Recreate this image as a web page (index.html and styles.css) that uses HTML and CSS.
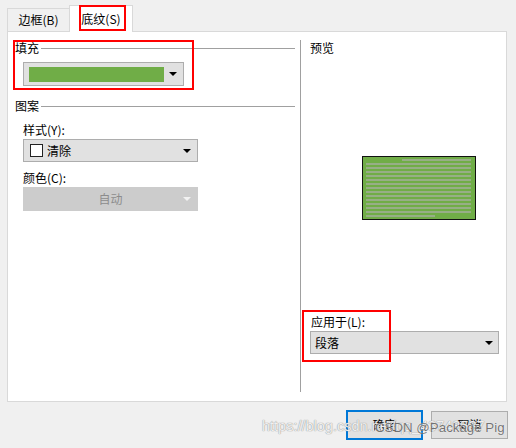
FILE: index.html
```html
<!DOCTYPE html>
<html>
<head>
<meta charset="utf-8">
<link rel="stylesheet" href="styles.css">
</head>
<body>
<div class="dialog">
  <div class="tabs">
    <div class="tab">边框(B)</div>
    <div class="tab active">底纹(S)</div>
  </div>
  <div class="panel">
    <div class="left">
      <div class="legend"><span>填充</span><i class="rule"></i></div>
      <div class="combo fill">
        <span class="swatch"></span>
        <span class="arrow"></span>
      </div>
      <div class="legend pattern"><span>图案</span><i class="rule"></i></div>
      <div class="label">样式(Y):</div>
      <div class="combo wide">
        <span class="check"></span>
        <span class="value">清除</span>
        <span class="arrow"></span>
      </div>
      <div class="label">颜色(C):</div>
      <div class="combo wide disabled">
        <span class="value center">自动</span>
        <span class="arrow"></span>
      </div>
    </div>
    <div class="divider"></div>
    <div class="right">
      <div class="label-top">预览</div>
      <div class="preview">
        <i class="stripe first"></i>
        <i class="stripe"></i><i class="stripe"></i><i class="stripe"></i>
        <i class="stripe"></i><i class="stripe"></i><i class="stripe"></i>
        <i class="stripe"></i><i class="stripe"></i><i class="stripe"></i>
        <i class="stripe"></i><i class="stripe"></i><i class="stripe"></i>
        <i class="stripe"></i>
        <i class="stripe last"></i>
      </div>
      <div class="apply">
        <div class="label">应用于(L):</div>
        <div class="combo apply-combo">
          <span class="value">段落</span>
          <span class="arrow"></span>
        </div>
      </div>
    </div>
  </div>
  <div class="buttons">
    <div class="btn default">确定</div>
    <div class="btn">取消</div>
  </div>
  <div class="mark mark-tab"></div>
  <div class="mark mark-fill"></div>
  <div class="mark mark-apply"></div>
  <div class="wm-url">https://blog.csdn.net/qq_43748537</div>
  <div class="wm-name">CSDN @Package Pig</div>
</div>
</body>
</html>
```
FILE: styles.css
```css
* { box-sizing: border-box; }
html, body {
  margin: 0;
  padding: 0;
  background: #f0f0f0;
}
body {
  width: 516px;
  height: 448px;
  overflow: hidden;
  font-family: "Noto Sans CJK SC", "Noto Sans", sans-serif;
  font-size: 12px;
  line-height: 16px;
  color: #000;
}
.dialog {
  position: relative;
  width: 516px;
  height: 448px;
}
.tabs {
  display: flex;
  align-items: flex-end;
  height: 31px;
  margin-left: 7px;
}
.tab {
  width: 63px;
  height: 23px;
  border: 1px solid #d9d9d9;
  border-bottom: none;
  display: flex;
  align-items: center;
  justify-content: center;
  background: #f0f0f0;
}
.tab.active {
  width: 64px;
  height: 27px;
  margin-left: -1px;
  margin-bottom: -1px;
  background: #fff;
  position: relative;
  z-index: 1;
  padding-bottom: 1px;
}
.panel {
  margin-left: 7px;
  width: 500px;
  height: 371px;
  background: #fff;
  border: 1px solid #d9d9d9;
  display: flex;
}
.left {
  width: 292px;
  padding: 8px 5px 0 7px;
  display: flex;
  flex-direction: column;
  align-items: flex-start;
}
.legend {
  display: flex;
  align-items: center;
  width: 100%;
  height: 16px;
}
.legend .rule {
  flex: 1;
  height: 1px;
  background: #a0a0a0;
  margin-left: 2px;
}
.legend.pattern { margin-top: 12px; }
.label {
  margin-left: 8px;
  margin-top: 8px;
  height: 16px;
}
.combo {
  display: flex;
  align-items: center;
  background: #e1e1e1;
  border: 1px solid #adadad;
  position: relative;
}
.combo .arrow {
  margin-left: auto;
  width: 0;
  height: 0;
  border-left: 4px solid transparent;
  border-right: 4px solid transparent;
  border-top: 4px solid #000;
}
.fill {
  margin-left: 8px;
  margin-top: 6px;
  width: 161px;
  height: 24px;
  padding: 0 6px 0 5px;
}
.swatch {
  width: 135px;
  height: 15px;
  background: #70ad47;
}
.wide {
  margin-left: 8px;
  margin-top: 1px;
  width: 175px;
  height: 23px;
  padding: 0 6px 0 6px;
}
.check {
  width: 13px;
  height: 13px;
  border: 1px solid #222;
  background: #fff;
  margin-right: 4px;
}
.value { color: #000; }
.wide.disabled {
  height: 24px;
  background: #cccccc;
  border-color: #cccccc;
}
.value.center {
  position: absolute;
  left: 0;
  right: 0;
  text-align: center;
  color: #8c8c8c;
}
.disabled .arrow { border-top-color: #f2f2f2; }
.divider {
  width: 1px;
  margin: 8px 0 9px;
  background: #a0a0a0;
}
.right {
  flex: 1;
  padding: 8px 7px 47px 9px;
  display: flex;
  flex-direction: column;
  align-items: flex-start;
}
.label-top { height: 16px; }
.preview {
  margin-top: 100px;
  margin-left: 52px;
  width: 114px;
  height: 64px;
  border: 1px solid #111;
  background: #70ad47;
  padding: 2px 4px 0 3px;
  display: flex;
  flex-direction: column;
  align-items: flex-end;
  gap: 2px;
}
.stripe {
  display: block;
  width: 105px;
  height: 2px;
  background: #97ae87;
}
.stripe.first { width: 69px; }
.stripe.last { width: 69px; align-self: flex-start; }
.apply { margin-top: auto; }
.apply .label { margin-left: 1px; margin-top: 0; }
.apply-combo {
  margin-top: 1px;
  width: 189px;
  height: 23px;
  padding: 0 5px 0 4px;
}
.buttons {
  display: flex;
  justify-content: flex-end;
  align-items: center;
  gap: 8px;
  padding-right: 8px;
  margin-top: 8px;
  height: 30px;
}
.btn {
  width: 77px;
  height: 28px;
  background: #e1e1e1;
  border: 1px solid #adadad;
  display: flex;
  align-items: center;
  justify-content: center;
}
.btn.default {
  height: 30px;
  border: 2px solid #0078d7;
}
.mark {
  position: absolute;
  border: 2px solid #ff0000;
  z-index: 3;
}
.mark-tab { left: 79px; top: 5px; width: 47px; height: 26px; }
.mark-fill { left: 13px; top: 40px; width: 181px; height: 50px; }
.mark-apply { left: 302px; top: 310px; width: 89px; height: 52px; }
.wm-url {
  position: absolute;
  left: 262px;
  top: 417px;
  font-family: "Liberation Sans", Arial, sans-serif;
  font-size: 14.5px;
  line-height: 18px;
  color: rgba(255, 255, 255, 0.85);
  text-shadow: 0 0 1px #9a9a9a, 0 0 1px #9a9a9a;
  z-index: 4;
  white-space: nowrap;
}
.wm-name {
  position: absolute;
  left: 375px;
  top: 419px;
  font-family: "Liberation Sans", Arial, sans-serif;
  font-size: 13.3px;
  line-height: 18px;
  color: rgba(90, 90, 90, 0.85);
  text-shadow: 0 0 1px #fff;
  z-index: 5;
  white-space: nowrap;
}
```
